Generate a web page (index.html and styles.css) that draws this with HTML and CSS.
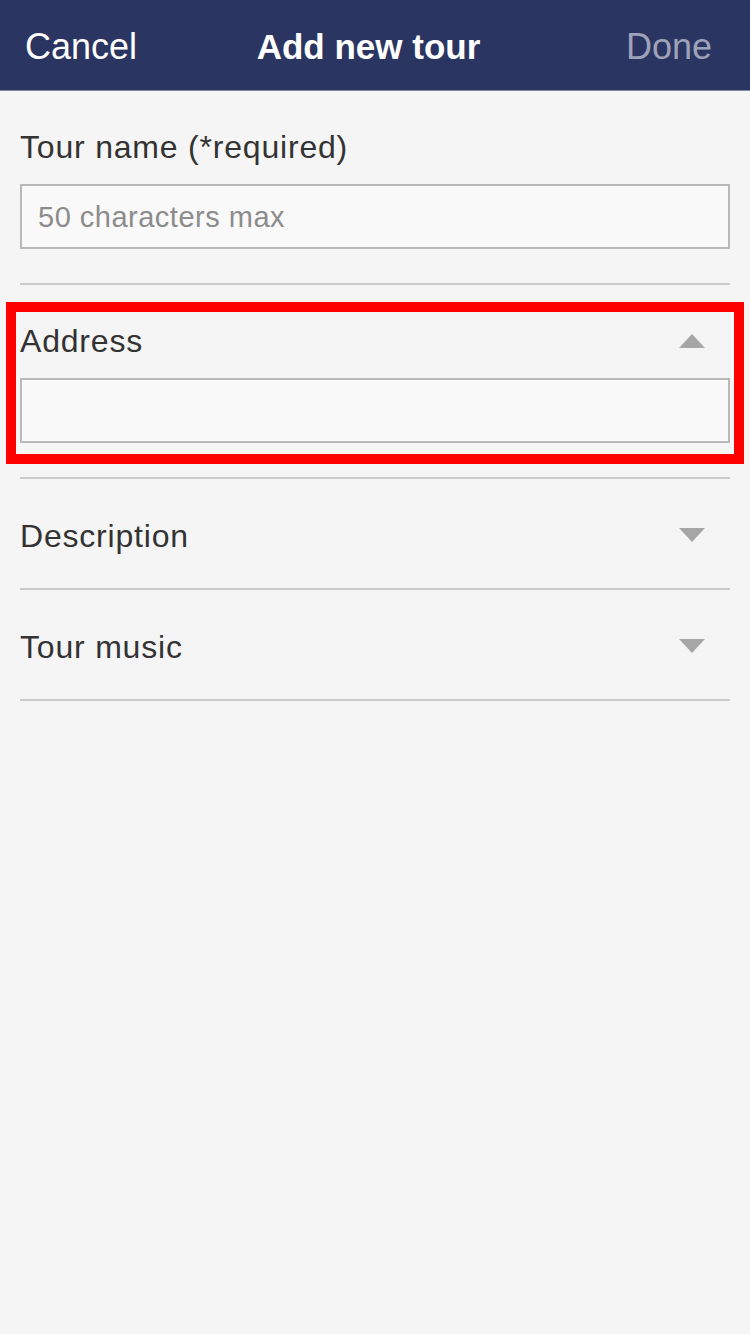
FILE: index.html
```html
<!DOCTYPE html>
<html lang="en">
<head>
<meta charset="utf-8">
<title>Add new tour</title>
<link rel="stylesheet" href="styles.css">
</head>
<body>
<header class="navbar">
  <span class="nav-cancel">Cancel</span>
  <span class="nav-title">Add new tour</span>
  <span class="nav-done">Done</span>
</header>
<main class="form">
  <section class="field">
    <div class="label">Tour name (*required)</div>
    <div class="input"><span class="placeholder">50 characters max</span></div>
  </section>
  <section class="highlight">
    <div class="row">
      <span class="label">Address</span>
      <svg class="caret" width="26" height="14" viewBox="0 0 26 14"><polygon points="13,0 26,14 0,14" fill="#a6a6a6"/></svg>
    </div>
    <div class="input"></div>
  </section>
  <section class="collapse">
    <span class="label">Description</span>
    <svg class="caret down" width="26" height="14" viewBox="0 0 26 14"><polygon points="0,0 26,0 13,14" fill="#a6a6a6"/></svg>
  </section>
  <section class="collapse">
    <span class="label">Tour music</span>
    <svg class="caret down" width="26" height="14" viewBox="0 0 26 14"><polygon points="0,0 26,0 13,14" fill="#a6a6a6"/></svg>
  </section>
</main>
</body>
</html>
```
FILE: styles.css
```css
html, body {
  margin: 0;
  padding: 0;
}
body {
  background: #f5f5f5;
  font-family: "Liberation Sans", Arial, sans-serif;
  color: #333333;
  width: 750px;
  min-height: 1334px;
}
.navbar {
  background: #2b3561;
  border-bottom: 1px solid #7f86a6;
  display: grid;
  grid-template-columns: 1fr auto 1fr;
  align-items: center;
  padding: 3px 38px 0 25px;
  box-sizing: border-box;
  height: 91px;
  font-size: 36px;
  line-height: 40px;
}
.nav-cancel {
  color: #ffffff;
  justify-self: start;
}
.nav-title {
  color: #ffffff;
  font-weight: bold;
  font-size: 35px;
}
.nav-done {
  color: #9ea2b9;
  justify-self: end;
}
.form {
  padding: 0 20px;
}
.label {
  font-size: 32px;
  line-height: 40px;
  letter-spacing: 0.8px;
  color: #333333;
}
.field {
  padding-top: 36px;
  padding-bottom: 34px;
  border-bottom: 2px solid #cbcbcb;
}
.input {
  margin-top: 17px;
  height: 65px;
  box-sizing: border-box;
  border: 2px solid #b9b9b9;
  background: #f9f9f9;
  display: flex;
  align-items: center;
  padding: 0 16px;
}
.placeholder {
  font-size: 29px;
  letter-spacing: 0.5px;
  color: #8c8c8c;
  padding-top: 2px;
}
.highlight {
  margin: 17px -14px 0;
  border: 10px solid #ff0000;
  padding: 9px 4px 11px;
}
.row {
  display: flex;
  align-items: center;
  justify-content: space-between;
}
.caret {
  margin-right: 25px;
  display: block;
}
.highlight + .collapse {
  margin-top: 13px;
  border-top: 2px solid #cbcbcb;
}
.collapse {
  display: flex;
  align-items: center;
  justify-content: space-between;
  padding: 37px 0 32px;
  border-bottom: 2px solid #cbcbcb;
}
.collapse .caret {
  margin-top: -3px;
}
```
